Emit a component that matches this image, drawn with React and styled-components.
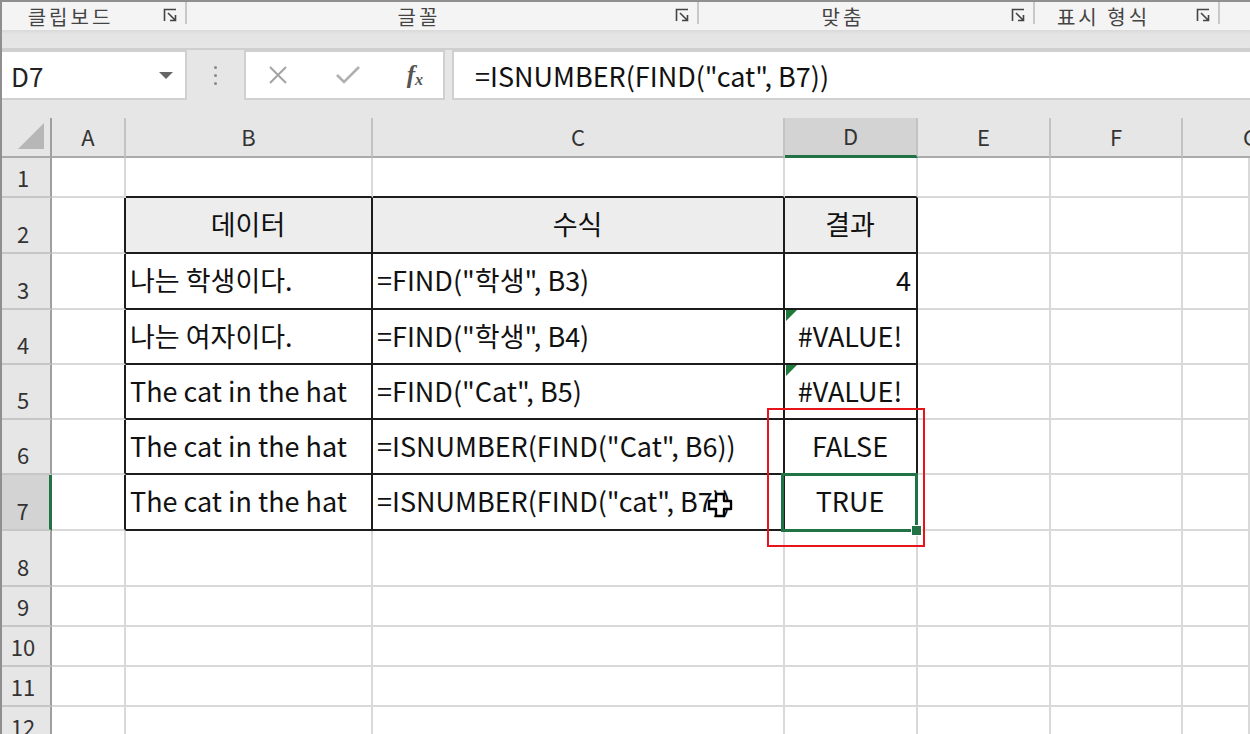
import React from 'react'
import styled, { createGlobalStyle } from 'styled-components'

const GlobalStyle = createGlobalStyle`
  html, body {
    margin: 0;
    padding: 0;
    background: #fff;
    overflow: hidden;
  }
  * { box-sizing: border-box; }
`

const FONT = `"Noto Sans CJK KR", "Noto Sans", sans-serif`

const COLS = ['A', 'B', 'C', 'D', 'E', 'F', 'G']
const COL_WIDTHS = [50, 74, 247, 412, 133, 133, 132]
const ROW_HEIGHTS = [40, 56, 56, 55, 55, 55, 56, 56, 40, 40, 40, 40]

// cell contents, keyed "row-col"
const DATA = {
  '2-B': { text: '데이터', align: 'center' },
  '2-C': { text: '수식', align: 'center' },
  '2-D': { text: '결과', align: 'center' },
  '3-B': { text: '나는 학생이다.' },
  '3-C': { text: '=FIND("학생", B3)' },
  '3-D': { text: '4', align: 'right' },
  '4-B': { text: '나는 여자이다.' },
  '4-C': { text: '=FIND("학생", B4)' },
  '4-D': { text: '#VALUE!', align: 'center', flag: true },
  '5-B': { text: 'The cat in the hat' },
  '5-C': { text: '=FIND("Cat", B5)' },
  '5-D': { text: '#VALUE!', align: 'center', flag: true },
  '6-B': { text: 'The cat in the hat' },
  '6-C': { text: '=ISNUMBER(FIND("Cat", B6))' },
  '6-D': { text: 'FALSE', align: 'center' },
  '7-B': { text: 'The cat in the hat' },
  '7-C': { text: '=ISNUMBER(FIND("cat", B7))' },
  '7-D': { text: 'TRUE', align: 'center' },
}

const GROUPS = [
  { label: '클립보드', width: 185 },
  { label: '글꼴', width: 512 },
  { label: '맞춤', width: 336 },
  { label: '표시 형식', width: 185 },
  { label: '', width: 32, empty: true },
]

const inTable = (r, c) => r >= 2 && r <= 7 && c >= 1 && c <= 3

const Launcher = () => (
  <svg width="15" height="15" viewBox="0 0 15 15">
    <path d="M1.5 13 V1.5 H13" fill="none" stroke="#444" strokeWidth="1.6" />
    <path d="M5 5 L12.5 12.5 M7 12.5 H12.5 V7" fill="none" stroke="#444" strokeWidth="1.6" />
  </svg>
)

const Cursor = () => (
  <svg width="26" height="26" viewBox="0 0 26 26">
    <path
      d="M9 2 H17 V9 H24 V17 H17 V24 H9 V17 H2 V9 H9 Z"
      fill="#fff"
      stroke="#000"
      strokeWidth="2.4"
      strokeLinejoin="round"
    />
  </svg>
)

const App = () => {
  return (
    <Frame>
      <GlobalStyle />
      <Ribbon>
        {GROUPS.map((g, i) => (
          <Group key={i} $width={g.width} $last={g.empty}>
            <GroupLabel>{g.label}</GroupLabel>
            {!g.empty && <Launcher />}
          </Group>
        ))}
      </Ribbon>
      <RibbonShade />
      <FormulaBar>
        <NameBox>
          <span>D7</span>
          <Caret />
        </NameBox>
        <Grip>
          <i /><i /><i />
        </Grip>
        <FxBox>
          <svg width="22" height="22" viewBox="0 0 22 22">
            <path d="M3 3 L19 19 M19 3 L3 19" stroke="#a3a3a3" strokeWidth="2" />
          </svg>
          <svg width="26" height="22" viewBox="0 0 26 22">
            <path d="M2 11 L9 18 L24 3" fill="none" stroke="#b0b0b0" strokeWidth="2.6" />
          </svg>
          <Fx>
            f<sub>x</sub>
          </Fx>
        </FxBox>
        <FormulaInput>=ISNUMBER(FIND("cat", B7))</FormulaInput>
      </FormulaBar>
      <Gap />
      <Sheet>
        <Grid>
          <Corner>
            <svg width="30" height="30" viewBox="0 0 30 30">
              <path d="M28 2 V28 H2 Z" fill="#b7b7b7" />
            </svg>
          </Corner>
          {COLS.map((c, i) => (
            <ColHead key={c} $active={c === 'D'} $last={i === COLS.length - 1}>
              {c}
            </ColHead>
          ))}
          {ROW_HEIGHTS.map((h, ri) => {
            const r = ri + 1
            return (
              <React.Fragment key={r}>
                <RowHead $active={r === 7}>{r}</RowHead>
                {COLS.map((c, ci) => {
                  const cell = DATA[`${r}-${c}`]
                  const blackRight = inTable(r, ci) || (ci === 0 && r >= 2 && r <= 7)
                  const blackBottom = inTable(r, ci) || (r === 1 && ci >= 1 && ci <= 3)
                  return (
                    <Cell
                      key={c}
                      $blackRight={blackRight}
                      $blackBottom={blackBottom}
                      $head={r === 2 && ci >= 1 && ci <= 3}
                      $align={cell?.align}
                      $flag={cell?.flag}
                    >
                      {cell?.text}
                    </Cell>
                  )
                })}
              </React.Fragment>
            )
          })}
        </Grid>
        <Highlight />
        <Selection>
          <FillHandle />
        </Selection>
        <CursorSpot>
          <Cursor />
        </CursorSpot>
      </Sheet>
    </Frame>
  )
}

export default App

const Frame = styled.div`
  position: relative;
  width: 1250px;
  height: 734px;
  overflow: hidden;
  background: #e6e6e6;
  font-family: ${FONT};
  border-left: 2px solid #8f8f8f;
  border-top: 2px solid #8f8f8f;
`

const Ribbon = styled.div`
  display: flex;
  height: 28px;
  background: #f4f4f4;
`

const Group = styled.div`
  display: flex;
  align-items: flex-start;
  width: ${(p) => p.$width}px;
  flex: none;
  height: 28px;
  padding-right: 9px;
  background: ${(p) =>
    p.$last ? 'none' : 'linear-gradient(#c9c9c9, #c9c9c9) right top / 2px 22px no-repeat'};
  svg { flex: none; margin-top: 6px; }
`

const GroupLabel = styled.div`
  flex: 1;
  text-align: center;
  padding-right: 24px;
  font-size: 20px;
  letter-spacing: 3px;
  line-height: normal;
  color: #444;
  white-space: nowrap;
`

const RibbonShade = styled.div`
  height: 20px;
  background: linear-gradient(#d9d9d9, #e4e4e4 4px, #e6e6e6);
  border-bottom: 2px solid #cfcfcf;
`

const FormulaBar = styled.div`
  display: flex;
  align-items: stretch;
  height: 50px;
`

const NameBox = styled.div`
  width: 185px;
  flex: none;
  display: flex;
  align-items: center;
  justify-content: space-between;
  padding: 0 12px 0 9px;
  background: #fff;
  border: 2px solid #d0d0d0;
  border-left: none;
  font-size: 26px;
  color: #222;
`

const Caret = styled.span`
  width: 0;
  height: 0;
  border-left: 7px solid transparent;
  border-right: 7px solid transparent;
  border-top: 7px solid #666;
`

const Grip = styled.div`
  width: 57px;
  flex: none;
  display: flex;
  flex-direction: column;
  align-items: center;
  justify-content: center;
  gap: 5px;
  i {
    width: 3px;
    height: 3px;
    border-radius: 50%;
    background: #888;
  }
`

const FxBox = styled.div`
  width: 201px;
  flex: none;
  display: flex;
  align-items: center;
  justify-content: space-between;
  padding: 0 20px 0 21px;
  background: #fff;
  border: 2px solid #d0d0d0;
  margin-right: 7px;
`

const Fx = styled.span`
  font-family: "Liberation Serif", serif;
  font-style: italic;
  font-weight: bold;
  font-size: 25px;
  color: #555;
  sub {
    font-size: 16px;
    vertical-align: -2px;
  }
`

const FormulaInput = styled.div`
  flex: 1;
  display: flex;
  align-items: center;
  padding-left: 21px;
  background: #fff;
  border: 2px solid #d0d0d0;
  border-right: none;
  font-size: 27px;
  color: #111;
  white-space: nowrap;
`

const Gap = styled.div`
  height: 18px;
`

const Sheet = styled.div`
  position: relative;
`

const Grid = styled.div`
  display: grid;
  grid-template-columns: ${COL_WIDTHS.map((w) => w + 'px').join(' ')} 1fr;
  grid-template-rows: 40px ${ROW_HEIGHTS.map((h) => h + 'px').join(' ')};
  background: #fff;
`

const Corner = styled.div`
  background: #e6e6e6;
  border-right: 2px solid #9f9f9f;
  border-bottom: 2px solid #aaa;
  display: flex;
  align-items: flex-end;
  justify-content: flex-end;
  padding: 0 4px 5px 0;
`

const ColHead = styled.div`
  display: flex;
  align-items: center;
  padding-bottom: 3px;
  background: ${(p) => (p.$active ? '#d3d3d3' : '#e6e6e6')};
  border-right: ${(p) => (p.$last ? 'none' : '2px solid #c3c3c3')};
  border-bottom: ${(p) => (p.$active ? '3px solid #217346' : '2px solid #aaa')};
  font-size: 22px;
  line-height: 30px;
  color: #333;
  overflow: hidden;
  justify-content: ${(p) => (p.$last ? 'flex-start' : 'center')};
  padding-left: ${(p) => (p.$last ? '60px' : '0')};
`

const RowHead = styled.div`
  display: flex;
  align-items: flex-end;
  justify-content: center;
  padding: 0 6px 3px 0;
  background: ${(p) => (p.$active ? '#d3d3d3' : '#e6e6e6')};
  border-right: ${(p) => (p.$active ? '3px solid #217346' : '2px solid #9f9f9f')};
  border-bottom: 2px solid #c6c6c6;
  font-size: 22px;
  line-height: 32px;
  color: #333;
`

const Cell = styled.div`
  position: relative;
  display: flex;
  align-items: center;
  justify-content: ${(p) =>
    p.$align === 'center' ? 'center' : p.$align === 'right' ? 'flex-end' : 'flex-start'};
  padding: 0 5px 2px 4px;
  background: ${(p) => (p.$head ? '#ededed' : '#fff')};
  border-right: 2px solid ${(p) => (p.$blackRight ? '#1c1c1c' : '#d9d9d9')};
  border-bottom: 2px solid ${(p) => (p.$blackBottom ? '#1c1c1c' : '#d9d9d9')};
  font-size: 27px;
  line-height: 36px;
  color: #111;
  white-space: nowrap;
  &::before {
    content: '';
    display: ${(p) => (p.$flag ? 'block' : 'none')};
    position: absolute;
    left: 1px;
    top: 0;
    width: 0;
    height: 0;
    border-top: 11px solid #1e7a3a;
    border-right: 11px solid transparent;
  }
`

const Highlight = styled.div`
  position: absolute;
  left: 765px;
  top: 290px;
  width: 158px;
  height: 139px;
  border: 2px solid #e8141c;
  pointer-events: none;
`

const Selection = styled.div`
  position: absolute;
  left: 779px;
  top: 355px;
  width: 137px;
  height: 59px;
  border: 3px solid #217346;
  pointer-events: none;
`

const FillHandle = styled.div`
  position: absolute;
  right: -6px;
  bottom: -6px;
  width: 9px;
  height: 9px;
  background: #217346;
  outline: 1px solid #fff;
`

const CursorSpot = styled.div`
  position: absolute;
  left: 705px;
  top: 374px;
  width: 26px;
  height: 26px;
  pointer-events: none;
`
